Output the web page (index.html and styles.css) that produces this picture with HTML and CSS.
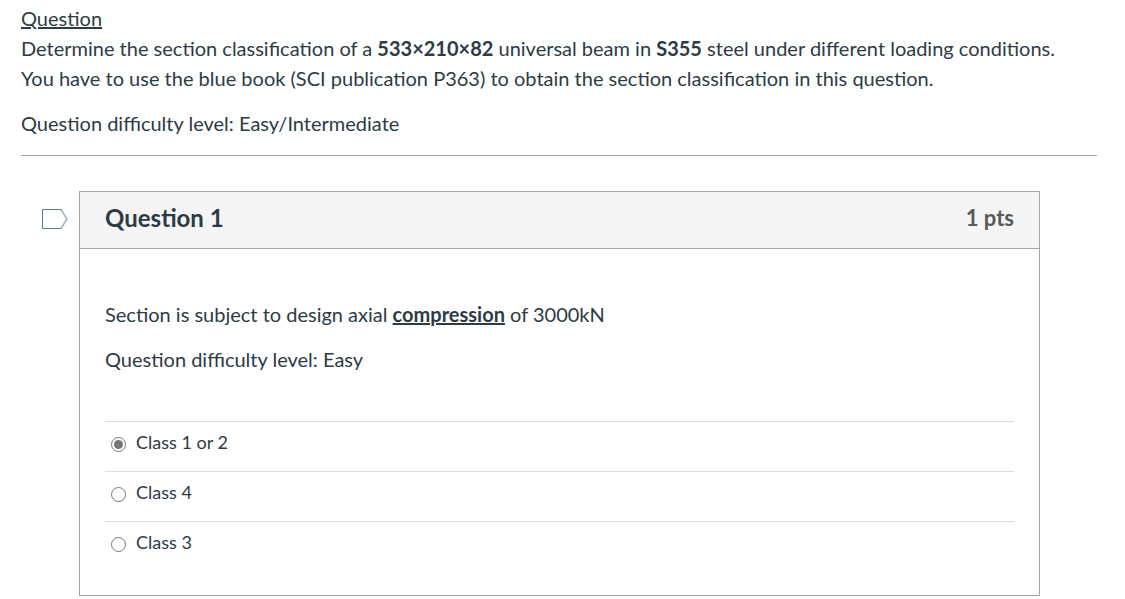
FILE: index.html
```html
<!DOCTYPE html>
<html lang="en">
<head>
  <meta charset="UTF-8">
  <meta name="viewport" content="width=device-width, initial-scale=1.0">
  <title>Section Classification Quiz</title>
  <link rel="stylesheet" href="styles.css">
</head>
<body>
  <main class="quiz">
    <section class="quiz-intro">
      <p><u>Question</u><br>
      Determine the section classification of a <strong>533×210×82</strong> universal beam in <strong>S355</strong> steel under different loading conditions.<br>
      You have to use the blue book (SCI publication P363) to obtain the section classification in this question.</p>
      <p>Question difficulty level: Easy/Intermediate</p>
    </section>

    <form class="question-row">
      <button type="button" class="flag-question" aria-label="Flag question">
        <svg width="26" height="22" viewBox="0 0 26 22" fill="none">
          <path d="M19 1.5L25 11L19 20.5" stroke="#9fb4c2" stroke-width="1.5"/>
          <path d="M19.5 1.5H0.5V20.5H19.5" stroke="#5b7f95"/>
        </svg>
      </button>

      <article class="question">
        <header class="question-header">
          <h2 class="question-name">Question 1</h2>
          <span class="question-points">1 pts</span>
        </header>
        <div class="question-body">
          <div class="question-text">
            <p>Section is subject to design axial <strong><u>compression</u></strong> of 3000kN</p>
            <p>Question difficulty level: Easy</p>
          </div>
          <div class="answers" role="radiogroup" aria-label="Answers">
            <label class="answer"><input type="radio" name="answer" value="1" checked><span>Class 1 or 2</span></label>
            <label class="answer"><input type="radio" name="answer" value="2"><span>Class 4</span></label>
            <label class="answer"><input type="radio" name="answer" value="3"><span>Class 3</span></label>
          </div>
        </div>
      </article>
    </form>
  </main>
</body>
</html>
```
FILE: styles.css
```css
:root {
  --text: #2d3b45;
  --border: #a5a5a5;
  --divider: #dddddd;
}

* {
  box-sizing: border-box;
}

body {
  margin: 0;
  background: #ffffff;
  color: var(--text);
  font-family: Lato, "Liberation Sans", sans-serif;
  font-size: 20px;
  line-height: 30px;
}

p {
  margin: 0 0 15px;
}

.quiz {
  padding: 3px 28px 0 21px;
}

.quiz-intro {
  padding-bottom: 2px;
  border-bottom: 1px solid var(--border);
}

.question-row {
  display: flex;
  align-items: flex-start;
  margin: 35px 57px 0 21px;
}

.flag-question {
  flex: none;
  width: 37px;
  height: 22px;
  margin-top: 17px;
  padding: 0;
  border: 0;
  background: none;
  text-align: left;
  cursor: pointer;
}

.flag-question svg {
  display: block;
}

.question {
  flex: 1;
  border: 1px solid var(--border);
}

.question-header {
  display: flex;
  align-items: center;
  justify-content: space-between;
  padding: 11px 25px 15px;
  background: #f5f5f5;
  border-bottom: 1px solid var(--border);
}

.question-name {
  margin: 0;
  font-size: 24px;
  font-weight: 700;
}

.question-points {
  color: #595959;
  font-size: 22px;
  font-weight: 700;
}

.question-body {
  padding: 50px 25px 24px;
}

.question-text {
  margin-bottom: 47px;
}

.answer {
  display: flex;
  align-items: center;
  gap: 10px;
  padding: 5px 6px 14px;
  border-top: 1px solid var(--divider);
  font-size: 18px;
  cursor: pointer;
}

/* grey ring and dot in every browser */
.answer input {
  appearance: none;
  width: 15px;
  height: 15px;
  margin: 5px 0 0;
  border: 1px solid #767676;
  border-radius: 50%;
  background: #ffffff;
}

.answer input:checked {
  padding: 2px;
  background: #767676 content-box;
}
```
